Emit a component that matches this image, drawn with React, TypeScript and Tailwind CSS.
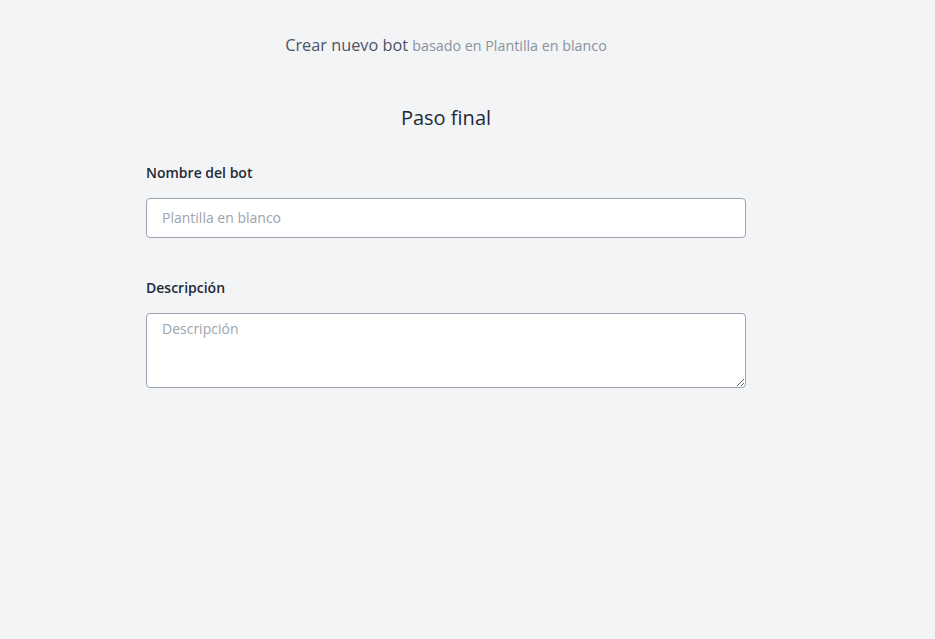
export default function App() {
  return (
    <div
      className="min-h-screen bg-[#f3f4f6] pr-[43px]"
      style={{ fontFamily: '"Open Sans", "Noto Sans", sans-serif' }}
    >
      <div className="mx-auto w-[600px] pt-[33px]">
        <p className="text-center text-[16.3px] leading-6 text-[#4b5563]">
          Crear nuevo bot{" "}
          <span className="text-[14.3px] text-[#8a929e]">basado en Plantilla en blanco</span>
        </p>
        <h1 className="mt-[46px] text-center text-[20px] leading-7 text-[#1f2937]">Paso final</h1>
        <form className="mt-[31px] flex flex-col">
          <label className="text-[14px] font-semibold leading-5 text-[#1f2937]">Nombre del bot</label>
          <input
            type="text"
            placeholder="Plantilla en blanco"
            className="mt-[15px] h-10 w-full rounded border border-[#9ca3af] bg-white px-[15px] pb-[2px] text-[14px] text-[#1f2937] placeholder:text-[#9ca3af] outline-none"
          />
          <label className="mt-[40px] text-[14px] font-semibold leading-5 text-[#1f2937]">Descripción</label>
          <textarea
            placeholder="Descripción"
            className="mt-[15px] h-[75px] w-full rounded border border-[#9ca3af] bg-white px-[15px] py-[4px] text-[14px] text-[#1f2937] placeholder:text-[#9ca3af] outline-none"
          />
        </form>
      </div>
    </div>
  );
}
